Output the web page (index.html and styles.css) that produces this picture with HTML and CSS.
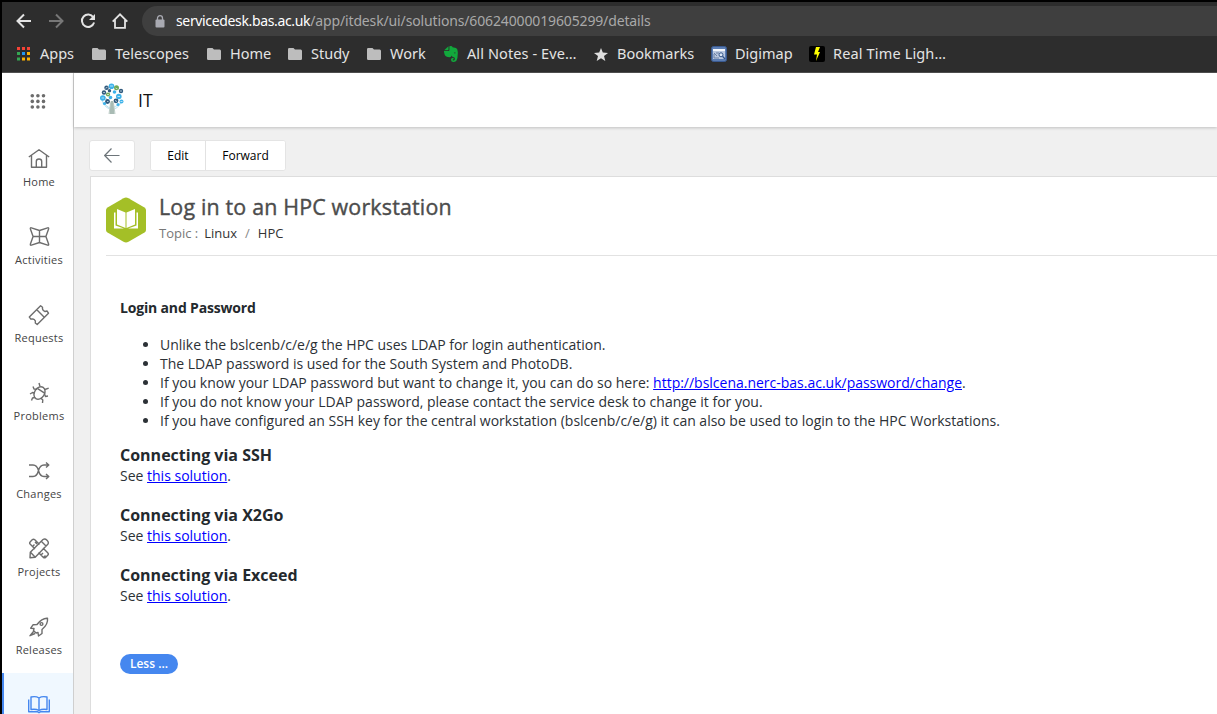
FILE: index.html
```html
<!DOCTYPE html>
<html lang="en">
<head>
<meta charset="utf-8">
<title>Log in to an HPC workstation</title>
<link rel="stylesheet" href="styles.css">
</head>
<body>
<svg class="defs" width="0" height="0"><defs>
<symbol id="folder" viewBox="0 0 14 12"><path d="M1.3 0H5.5L7 1.5H12.7Q14 1.5 14 3V10.7Q14 12 12.7 12H1.3Q0 12 0 10.7V1.3Q0 0 1.3 0Z" fill="#bdbdbd"/></symbol>
</defs></svg>
<div class="window">
  <div class="browser">
    <div class="toolbar">
      <div class="nav">
        <svg width="16" height="16" viewBox="0 0 16 16" fill="none" stroke="#e3e3e3" stroke-width="2"><path d="M15 8H2M8 1.5L1.5 8L8 14.5"/></svg>
        <svg width="16" height="16" viewBox="0 0 16 16" fill="none" stroke="#777" stroke-width="2"><path d="M1 8H14M8 1.5L14.5 8L8 14.5"/></svg>
        <svg width="16" height="16" viewBox="0 0 16 16"><path d="M13.3 4.2A6.2 6.2 0 1 0 14.1 9.5" fill="none" stroke="#e3e3e3" stroke-width="2"/><path d="M15 1V7H9Z" fill="#e3e3e3"/></svg>
        <svg width="16" height="16" viewBox="0 0 16 16" fill="none" stroke="#e3e3e3" stroke-width="1.8"><path d="M.7 8.7L8 1.3L15.3 8.7M3 7V14.8H13V7"/></svg>
      </div>
      <div class="address">
        <svg width="10" height="13" viewBox="0 0 10 13"><path d="M2.5 5V3.2a2.5 2.5 0 0 1 5 0V5" fill="none" stroke="#a9aab2" stroke-width="1.3"/><rect x=".5" y="4.5" width="9" height="8" rx="1" fill="#a9aab2"/></svg>
        <span class="url"><span class="host">servicedesk.bas.ac.uk</span><span class="path">/app/itdesk/ui/solutions/60624000019605299/details</span></span>
      </div>
    </div>
    <div class="bookmarks">
      <div class="bm apps"><svg width="13" height="14" viewBox="0 0 13 14"><path d="M0 0h3v3H0zM5 0h3v3H5zM10 0h3v3h-3z" fill="#f44336"/><path d="M0 5h3v3H0zM0 10.500h3v3H0z" fill="#34a853"/><path d="M5 5h3v3H5z" fill="#2196f3"/><path d="M10 5h3v3h-3zM5 10.500h3v3H5zM10 10.500h3v3h-3z" fill="#ffb300"/></svg><span>Apps</span></div>
      <div class="bm telescopes"><svg width="14" height="12"><use href="#folder"/></svg><span>Telescopes</span></div>
      <div class="bm home"><svg width="14" height="12"><use href="#folder"/></svg><span>Home</span></div>
      <div class="bm study"><svg width="14" height="12"><use href="#folder"/></svg><span>Study</span></div>
      <div class="bm work"><svg width="14" height="12"><use href="#folder"/></svg><span>Work</span></div>
      <div class="bm notes"><svg width="14" height="16" viewBox="0 0 14 16"><path d="M4.500.2V3.500Q4.500 4.200 3.700 4.200H.2ZM5.400.2Q8.300-.3 8.600 1.200L12 2Q13.600 2.500 13.800 6Q14 12 12.400 14.800Q11.600 16 9.500 15.900Q6.800 15.800 7 13.300Q7.300 11.600 9.600 11.800V13.300Q8.600 13.200 8.600 14Q8.700 14.500 9.700 14.400Q11 14.200 10.800 12.300Q10.500 10.500 8.300 10.700L7.500 9.500Q7.200 11.300 5.500 11.200Q1.500 11 .7 8.700Q-.1 6.500 0 5.100H4.300Q5.400 5 5.400 3.900Z" fill="#12a83c"/><circle cx="10.800" cy="6.800" r=".9" fill="#216b34"/></svg><span>All Notes - Eve…</span></div>
      <div class="bm marks"><svg width="14" height="13" viewBox="0 0 14 13"><path d="M7 0L8.800 4.600L14 4.900L10 8.100L11.300 13L7 10.200L2.700 13L4 8.100L0 4.900L5.200 4.600Z" fill="#dedede"/></svg><span>Bookmarks</span></div>
      <div class="bm digimap"><svg width="16" height="16" viewBox="0 0 16 16"><rect x=".5" y=".5" width="15" height="15" rx="2" fill="#5b7db3" stroke="#3a5a91"/><rect x="2" y="3" width="12" height="10" fill="#b9c8e0"/><path d="M2 3h12v2H2z" fill="#f4f7fc"/><path d="M3 7l3 3M3 8v4h5M5 7h3" fill="none" stroke="#6b80a5"/><circle cx="10" cy="8.800" r="2" fill="#dce8f7" stroke="#34558a"/><path d="M11.500 10.300L14 13" stroke="#34558a" stroke-width="1.300"/></svg><span>Digimap</span></div>
      <div class="bm light"><svg width="16" height="16" viewBox="0 0 16 16"><rect width="16" height="16" rx="2" fill="#000"/><path d="M7 1H11L9 6H11L7 15L8 8.500H5Z" fill="#ff0"/></svg><span>Real Time Ligh…</span></div>
    </div>
  </div>
  <div class="app">
    <nav class="sidebar">
      <div class="launcher"><svg width="16" height="16" viewBox="0 0 16 16" fill="#6c6c6c"><circle cx="2.300" cy="1.800" r="1.800"/><circle cx="7.900" cy="1.800" r="1.800"/><circle cx="13.500" cy="1.800" r="1.800"/><circle cx="2.300" cy="7.400" r="1.800"/><circle cx="7.900" cy="7.400" r="1.800"/><circle cx="13.500" cy="7.400" r="1.800"/><circle cx="2.300" cy="13" r="1.800"/><circle cx="7.900" cy="13" r="1.800"/><circle cx="13.500" cy="13" r="1.800"/></svg></div>
      <a class="item"><svg viewBox="0 0 22 22"><path d="M.8 9L11 1.800L21.200 9M3.500 7.500V19.300H18.500V7.500M8.300 19V13.500Q8.300 11 11 11T13.700 13.500V19"/></svg><span>Home</span></a>
      <a class="item"><svg viewBox="0 0 22 22"><path d="M3.400 1.900L11.500 4.500L19.600 1.900Q21 1.500 20.600 2.900L17.900 10.500L20.600 18.100Q21 19.500 19.600 19.100L11.500 16.500L3.400 19.100Q2 19.500 2.400 18.100L5.100 10.500L2.400 2.900Q2 1.500 3.400 1.900ZM11.500 4.500V16.500M5.100 10.500H17.900"/></svg><span>Activities</span></a>
      <a class="item"><svg viewBox="0 0 22 22"><path d="M1.300 13L12.600 1.700L14.500 3.200Q14 6.500 17 7.500L19 7L20.500 9.200L9.200 20.500L7.300 19Q8 16.800 6.200 15.500Q5 14.600 3.100 15.200ZM8.800 5.800L16 13"/></svg><span>Requests</span></a>
      <a class="item"><svg viewBox="0 0 22 22"><ellipse cx="11.500" cy="11" rx="5" ry="6.700" transform="rotate(33 11.500 11)"/><path d="M9.300 6.300L17 11.300M12 4.500L11 1M17 7.500L20.700 6.200M9 7.300L6 7L5 4.500M7 11L4.500 10.500L2 12M7 15.500L4.500 16L3.500 18.500M13 16.200L14.800 18L14.500 21M16.700 12.500L17.500 14.500L20 14"/></svg><span>Problems</span></a>
      <a class="item"><svg viewBox="0 0 22 22"><path d="M1 5H5Q9 5 10.500 10.500Q12 16.500 16 16.500H20.500M1 16.500H5Q9 16.500 10.500 10.500Q12 5 16 5H20.500M18 2.500L20.800 5L18 7.500M18 14L20.800 16.500L18 19"/></svg><span>Changes</span></a>
      <a class="item"><svg viewBox="0 0 22 22"><path d="M7 11L2.300 6.300Q1 5 2.300 3.700L4.200 1.800Q5.500.5 6.800 1.800L11.500 6.500M15 10L19.700 14.700Q21 16 19.700 17.300L17.800 19.200Q16.500 20.500 15.200 19.200L10.500 14.500M4.500 8.500L6.500 6.500M7 4L9 6M13 17L15 15M15.500 19.500L17.500 17.500M2 19.700L2.300 14.200L15 1.500Q17 .3 19 2.300Q21.200 4.500 19.800 6.300L7.200 19.200ZM2.500 14.200L7 19M13.500 3.500L18 8"/></svg><span>Projects</span></a>
      <a class="item"><svg viewBox="0 0 22 22"><path d="M19.500 2.200Q14 1.800 9 8.500L5 8.800L2.700 12.200L6 12.500L5.500 14.500L8 17L10 16.500L10.500 20L14 17.500V13.500Q20.300 8.500 19.500 2.200ZM5.500 15.500L2 19.700L7 17.500"/><circle cx="13.500" cy="8" r="1.400"/></svg><span>Releases</span></a>
      <a class="item active"><svg viewBox="0 0 22 22"><path d="M11 4Q8 2 3 3V15.500Q8 14.700 11 16.500Q14 14.700 19 15.500V3Q14 2 11 4ZM11 4V16.500M.7 5.500V17.700H9.300L11 18.700L12.700 17.700H21.300V5.500"/></svg></a>
    </nav>
    <div class="main">
      <header class="brand">
        <svg class="logo" width="24" height="32" viewBox="0 0 24 32"><path d="M4 20Q9 26 12 25T21 20M2 17Q4 24 10 26M22 17Q20 24 14 26" fill="none" stroke="#b7dfee"/><path d="M9 31L10.500 20L5 14M15 31L13.500 20L19 14" fill="none" stroke="#c3d2cd"/><path d="M9.500 31L10.800 18H13.200L14.500 31Z" fill="#a9bbb4"/><g fill="#3db2ea"><circle cx="11.500" cy="3.200" r="2.800"/><circle cx="2.800" cy="15" r="2.800"/><circle cx="18.800" cy="13.500" r="2.800"/><circle cx="14.500" cy="9" r="1.800"/><circle cx="21.500" cy="18.500" r="2"/><circle cx="10.500" cy="14.500" r="1.800"/><circle cx="4.500" cy="20.500" r="1.600"/><circle cx="18" cy="21.500" r="1.500"/></g><g fill="#315a7d"><circle cx="6.500" cy="4.800" r="2.200"/><circle cx="21" cy="8" r="2.200"/><circle cx="4" cy="9.500" r="2.200"/><circle cx="7.500" cy="18.500" r="2.400"/><circle cx="16" cy="17.800" r="2.400"/><circle cx="9.500" cy="7.800" r="1.700"/></g><g fill="#6fa757"><circle cx="16.500" cy="4.800" r="2.500"/><circle cx="8" cy="11.500" r="2.100"/></g><g fill="none" stroke="#e8f4fa" stroke-width=".7"><path d="M10 3h3M5.500 5.200l2-1M15.500 5l2 1M1.500 15h2.500M7 18.500h1.500M15 17.500l2 1M17.500 13.500h2.500M20.500 18.500h2M7 11.500h2M3.200 9.500h1.700M20 8h2"/></g></svg>
        <span>IT</span>
      </header>
      <div class="actions">
        <button class="back"><svg width="16" height="16" viewBox="0 0 16 16" fill="none" stroke="#6d757a" stroke-width="1.200"><path d="M15.500 7.500H.7M7.500 .5L.7 7.500L7.500 14.500"/></svg></button>
        <div class="group"><button class="edit">Edit</button><button class="forward">Forward</button></div>
      </div>
      <main class="card">
        <div class="head">
          <svg width="40" height="46" viewBox="0 0 40 46"><path d="M17.500 1.200Q20 0 22.500 1.200L38.500 10.500Q40 11.500 40 13V33Q40 34.500 38.500 35.500L22.500 44.800Q20 46 17.500 44.800L1.500 35.500Q0 34.500 0 33V13Q0 11.500 1.500 10.500Z" fill="#a4bf27"/><path d="M11 12L19.500 15.500V31L11 27.500ZM29 12L20.500 15.500V31L29 27.500ZM8 15.500H9.500V28.500L18 31.500H8ZM32 15.500H30.500V28.500L22 31.500H32Z" fill="#fff"/></svg>
          <div class="heading"><h1>Log in to an HPC workstation</h1><div class="topic"><span class="label">Topic :</span><span>Linux</span><span class="slash">/</span><span>HPC</span></div></div>
        </div>
        <article class="content">
          <h3>Login and Password</h3>
          <ul>
            <li>Unlike the bslcenb/c/e/g the HPC uses LDAP for login authentication.</li>
            <li>The LDAP password is used for the South System and PhotoDB.</li>
            <li>If you know your LDAP password but want to change it, you can do so here: <a href="#">http://bslcena.nerc-bas.ac.uk/password/change</a>.</li>
            <li>If you do not know your LDAP password, please contact the service desk to change it for you.</li>
            <li>If you have configured an SSH key for the central workstation (bslcenb/c/e/g) it can also be used to login to the HPC Workstations.</li>
          </ul>
          <section><h2>Connecting via SSH</h2><p>See <a href="#">this solution</a>.</p></section>
          <section><h2>Connecting via X2Go</h2><p>See <a href="#">this solution</a>.</p></section>
          <section><h2>Connecting via Exceed</h2><p>See <a href="#">this solution</a>.</p></section>
          <button class="less">Less ...</button>
        </article>
      </main>
    </div>
  </div>
</div>
</body>
</html>
```
FILE: styles.css
```css
* { box-sizing: border-box; }
body { margin: 0; overflow: hidden; background: #000; font-family: "Open Sans", "Noto Sans", sans-serif; }
svg { display: block; flex: none; }
.defs { position: absolute; }
button { font: inherit; border: 0; margin: 0; padding: 0; }
.window { height: 714px; padding: 2px 0 0 2px; display: flex; flex-direction: column; overflow: hidden; }

.browser { height: 71px; flex: none; background: #2d2d2d; border-bottom: 1px solid #505050; font-family: "Noto Sans", sans-serif; }
.toolbar { display: flex; height: 38px; padding: 4px 0; }
.nav { width: 140px; display: flex; align-items: center; gap: 16px; padding-left: 14px; }
.address { flex: 1; height: 30px; display: flex; align-items: center; gap: 11px; padding-left: 13px; background: #3f3f3f; border-radius: 15px 0 0 15px; }
.url { font-size: 14px; line-height: 20px; white-space: nowrap; }
.host { color: #fff; letter-spacing: -0.35px; }
.path { color: #a9a9a9; letter-spacing: -0.14px; }
.bookmarks { display: flex; height: 28px; padding-left: 15px; }
.bm { display: flex; align-items: center; gap: 9px; height: 28px; flex: none; font-size: 14.500px; color: #e4e4e4; white-space: nowrap; }
.bm span { padding-bottom: 2px; }
.apps { width: 75px; gap: 10px; }
.telescopes { width: 115px; }
.home { width: 81px; }
.study { width: 79px; }
.work { width: 77px; }
.notes { width: 150px; letter-spacing: 0.1px; }
.marks { width: 117px; }
.digimap { width: 98px; gap: 8px; }
.light { gap: 8px; letter-spacing: 0.15px; }

.app { flex: 1; min-height: 0; display: flex; background: #f0f0f0; }
.sidebar { width: 72px; flex: none; background: #fff; border-right: 1px solid #cfcfcf; overflow: hidden; }
.launcher { height: 54px; display: flex; justify-content: center; padding-top: 21px; }
.item { height: 78px; display: flex; flex-direction: column; align-items: center; padding: 21px 0 0 3px; color: #444; }
.item svg { width: 22px; height: 22px; fill: none; stroke: #6d6d6d; stroke-width: 1.400; stroke-linejoin: round; }
.item span { font-size: 11px; line-height: 15px; margin-top: 4px; letter-spacing: 0.25px; }
.item.active { background: #f0f8ff; border-left: 2px solid #4587ef; padding-left: 1px; }
.item.active svg { stroke: #4587ef; }

.main { flex: 1; min-width: 0; display: flex; flex-direction: column; }
.brand { height: 54px; flex: none; display: flex; align-items: center; gap: 14px; padding: 0 0 2px 26px; background: #fff; box-shadow: 0 1px 3px rgba(0,0,0,.2); font-size: 17.500px; color: #111; }
.brand span { padding-top: 2px; }
.actions { height: 49px; flex: none; display: flex; gap: 15px; padding: 13px 0 0 15px; }
.back, .group { height: 31px; background: #fff; border: 1px solid #e4e4e4; border-radius: 3px; }
.back { width: 46px; display: flex; align-items: center; justify-content: center; }
.group { width: 136px; display: flex; overflow: hidden; }
.group button { background: #fff; color: #000; font-size: 12px; }
.edit { width: 55px; }
.group .edit { border-right: 1px solid #e2e2e2; }
.forward { flex: 1; }
.card { flex: 1; margin-left: 16px; background: #fff; border: solid #ddd; border-width: 1px 0 0 1px; }
.head { height: 79px; margin-left: 15px; display: flex; gap: 13px; padding-top: 20px; border-bottom: 1px solid #e2e2e2; }
.heading { margin-top: -5px; }
h1 { margin: 0; font-size: 21.400px; line-height: 30px; font-weight: 400; letter-spacing: 0.18px; color: #4c4c4c; -webkit-text-stroke: 0.4px #4c4c4c; white-space: nowrap; }
.topic { display: flex; margin-top: 2px; font-size: 13px; line-height: 18px; color: #333; }
.label { color: #777; margin-right: 6px; }
.slash { color: #888; margin: 0 8px; }
.content { padding: 42px 0 0 29px; font-size: 14px; line-height: 19px; color: #2c3136; }
.content a { color: #00f; text-decoration: underline; }
h3 { margin: 0 0 18px; font-size: 14px; line-height: 19px; font-weight: 700; color: #24292d; letter-spacing: -0.17px; }
ul { margin: 0 0 14px; padding-left: 40px; letter-spacing: -0.008px; }
li { white-space: nowrap; }
section { height: 60px; }
h2 { margin: 0; font-size: 16px; line-height: 22px; font-weight: 700; color: #24292d; }
p { margin: 0; line-height: 19px; }
.less { display: block; width: 58px; height: 20px; margin-top: 30px; border-radius: 10px; background: #4587ef; color: #fff; font-size: 12px; line-height: 18px; font-weight: 600; }
```
